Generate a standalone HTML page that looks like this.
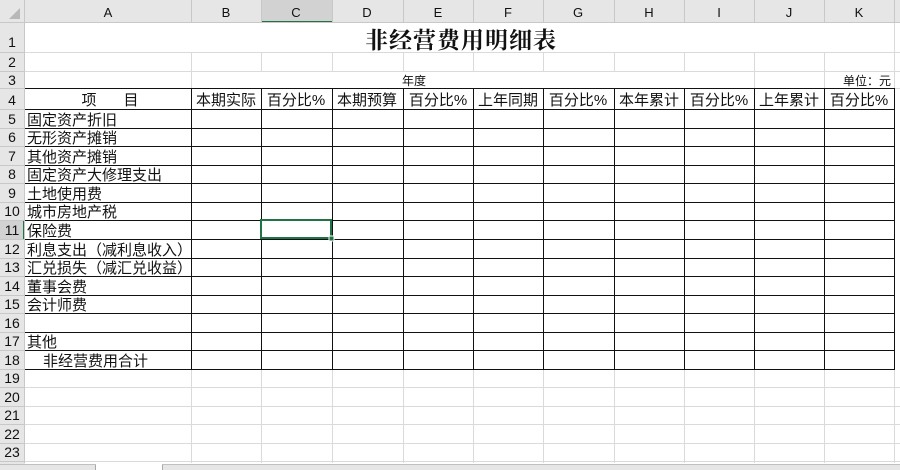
<!DOCTYPE html>
<html><head><meta charset="utf-8"><style>
html,body{margin:0;padding:0;background:#fff;width:900px;height:470px;overflow:hidden}
svg{display:block}
text{font-family:"Liberation Sans","Noto Sans CJK SC",sans-serif;fill:#111}
.h{font-family:"Liberation Serif","Noto Serif CJK SC",serif;font-size:13px;fill:#444}
.c{font-size:15px}
</style></head><body>
<svg width="900" height="470" viewBox="0 0 900 470" xmlns="http://www.w3.org/2000/svg">
<!-- headers bg -->
<rect x="0" y="0" width="900" height="23" fill="#e6e6e6"/>
<rect x="0" y="0" width="25" height="470" fill="#e6e6e6"/>
<rect x="261" y="0" width="71" height="22" fill="#d2d2d2"/>
<rect x="261" y="21" width="71" height="2" fill="#217346"/>
<rect x="0" y="220" width="24" height="19" fill="#d2d2d2"/>
<rect x="23" y="220" width="2" height="19" fill="#217346"/>
<polygon points="20,8 20,19 9,19" fill="#b8b8b8"/>
<!-- header separators -->
<g stroke="#c8c8c8" stroke-width="1">
<line x1="0" y1="22.5" x2="900" y2="22.5"/>
<line x1="24.5" y1="0" x2="24.5" y2="463"/>
<line x1="191.5" y1="0" x2="191.5" y2="22"/><line x1="261.5" y1="0" x2="261.5" y2="22"/><line x1="332.5" y1="0" x2="332.5" y2="22"/><line x1="403.5" y1="0" x2="403.5" y2="22"/><line x1="473.5" y1="0" x2="473.5" y2="22"/><line x1="543.5" y1="0" x2="543.5" y2="22"/><line x1="614.5" y1="0" x2="614.5" y2="22"/><line x1="684.5" y1="0" x2="684.5" y2="22"/><line x1="754.5" y1="0" x2="754.5" y2="22"/><line x1="824.5" y1="0" x2="824.5" y2="22"/><line x1="894.5" y1="0" x2="894.5" y2="22"/>
<line x1="0" y1="52.5" x2="24" y2="52.5"/><line x1="0" y1="71.5" x2="24" y2="71.5"/><line x1="0" y1="88.5" x2="24" y2="88.5"/><line x1="0" y1="109.5" x2="24" y2="109.5"/><line x1="0" y1="128.5" x2="24" y2="128.5"/><line x1="0" y1="146.5" x2="24" y2="146.5"/><line x1="0" y1="165.5" x2="24" y2="165.5"/><line x1="0" y1="183.5" x2="24" y2="183.5"/><line x1="0" y1="202.5" x2="24" y2="202.5"/><line x1="0" y1="220.5" x2="24" y2="220.5"/><line x1="0" y1="239.5" x2="24" y2="239.5"/><line x1="0" y1="258.5" x2="24" y2="258.5"/><line x1="0" y1="276.5" x2="24" y2="276.5"/><line x1="0" y1="295.5" x2="24" y2="295.5"/><line x1="0" y1="313.5" x2="24" y2="313.5"/><line x1="0" y1="332.5" x2="24" y2="332.5"/><line x1="0" y1="350.5" x2="24" y2="350.5"/><line x1="0" y1="369.5" x2="24" y2="369.5"/><line x1="0" y1="387.5" x2="24" y2="387.5"/><line x1="0" y1="406.5" x2="24" y2="406.5"/><line x1="0" y1="424.5" x2="24" y2="424.5"/><line x1="0" y1="443.5" x2="24" y2="443.5"/><line x1="0" y1="461.5" x2="24" y2="461.5"/>
</g>
<!-- light gridlines -->
<g stroke="#dadada" stroke-width="1">
<line x1="191.5" y1="23" x2="191.5" y2="463"/><line x1="261.5" y1="23" x2="261.5" y2="463"/><line x1="332.5" y1="23" x2="332.5" y2="463"/><line x1="403.5" y1="23" x2="403.5" y2="463"/><line x1="473.5" y1="23" x2="473.5" y2="463"/><line x1="543.5" y1="23" x2="543.5" y2="463"/><line x1="614.5" y1="23" x2="614.5" y2="463"/><line x1="684.5" y1="23" x2="684.5" y2="463"/><line x1="754.5" y1="23" x2="754.5" y2="463"/><line x1="824.5" y1="23" x2="824.5" y2="463"/><line x1="894.5" y1="23" x2="894.5" y2="463"/>
<line x1="25" y1="52.5" x2="900" y2="52.5"/><line x1="25" y1="71.5" x2="900" y2="71.5"/><line x1="25" y1="88.5" x2="900" y2="88.5"/>
<line x1="25" y1="387.5" x2="900" y2="387.5"/><line x1="25" y1="406.5" x2="900" y2="406.5"/><line x1="25" y1="424.5" x2="900" y2="424.5"/><line x1="25" y1="443.5" x2="900" y2="443.5"/><line x1="25" y1="461.5" x2="900" y2="461.5"/>
</g>
<!-- merged covers -->
<rect x="25" y="23" width="869" height="29" fill="#fff"/>
<rect x="192" y="72" width="562" height="16" fill="#fff"/>
<!-- black table lines -->
<g stroke="#111" stroke-width="1">
<line x1="25" y1="88.5" x2="895" y2="88.5"/><line x1="25" y1="109.5" x2="895" y2="109.5"/><line x1="25" y1="128.5" x2="895" y2="128.5"/><line x1="25" y1="146.5" x2="895" y2="146.5"/><line x1="25" y1="165.5" x2="895" y2="165.5"/><line x1="25" y1="183.5" x2="895" y2="183.5"/><line x1="25" y1="202.5" x2="895" y2="202.5"/><line x1="25" y1="220.5" x2="895" y2="220.5"/><line x1="25" y1="239.5" x2="895" y2="239.5"/><line x1="25" y1="258.5" x2="895" y2="258.5"/><line x1="25" y1="276.5" x2="895" y2="276.5"/><line x1="25" y1="295.5" x2="895" y2="295.5"/><line x1="25" y1="313.5" x2="895" y2="313.5"/><line x1="25" y1="332.5" x2="895" y2="332.5"/><line x1="25" y1="350.5" x2="895" y2="350.5"/><line x1="25" y1="369.5" x2="895" y2="369.5"/>
<line x1="191.5" y1="88" x2="191.5" y2="370"/><line x1="261.5" y1="88" x2="261.5" y2="370"/><line x1="332.5" y1="88" x2="332.5" y2="370"/><line x1="403.5" y1="88" x2="403.5" y2="370"/><line x1="473.5" y1="88" x2="473.5" y2="370"/><line x1="543.5" y1="88" x2="543.5" y2="370"/><line x1="614.5" y1="88" x2="614.5" y2="370"/><line x1="684.5" y1="88" x2="684.5" y2="370"/><line x1="754.5" y1="88" x2="754.5" y2="370"/><line x1="824.5" y1="88" x2="824.5" y2="370"/><line x1="894.5" y1="88" x2="894.5" y2="370"/>
</g>
<!-- selection -->
<rect x="261" y="220" width="70" height="18" fill="none" stroke="#217346" stroke-width="2"/>
<rect x="329" y="236" width="5" height="5" fill="#217346" stroke="#fff" stroke-width="1"/>
<!-- column letters -->
<g class="h" text-anchor="middle">
<text x="108" y="17">A</text><text x="226" y="17">B</text><text x="296" y="17">C</text><text x="367" y="17">D</text><text x="438" y="17">E</text><text x="508" y="17">F</text><text x="578" y="17">G</text><text x="649" y="17">H</text><text x="719" y="17">I</text><text x="789" y="17">J</text><text x="859" y="17">K</text>
</g>
<!-- row numbers -->
<g class="h" text-anchor="middle" style="font-size:14px">
<text x="12" y="47">1</text><text x="12" y="67">2</text><text x="12" y="85">3</text><text x="12" y="105">4</text><text x="12" y="124">5</text><text x="12" y="142">6</text><text x="12" y="161">7</text><text x="12" y="179">8</text><text x="12" y="198">9</text><text x="12" y="216">10</text><text x="12" y="235">11</text><text x="12" y="254">12</text><text x="12" y="272">13</text><text x="12" y="291">14</text><text x="12" y="309">15</text><text x="12" y="328">16</text><text x="12" y="346">17</text><text x="12" y="365">18</text><text x="12" y="383">19</text><text x="12" y="402">20</text><text x="12" y="420">21</text><text x="12" y="439">22</text><text x="12" y="457">23</text>
</g>
<!-- title -->
<text x="461" y="48" text-anchor="middle" style="font-family:'Liberation Serif','Noto Serif CJK SC',serif;font-size:23px;font-weight:bold;letter-spacing:1px">非经营费用明细表</text>
<text x="414" y="85" text-anchor="middle" style="font-size:12px">年度</text>
<text x="891" y="85" text-anchor="end" style="font-size:12px">单位：元</text>
<!-- header row -->
<g class="c" text-anchor="middle">
<text x="89" y="105">项</text><text x="131" y="105">目</text>
<text x="226" y="105">本期实际</text><text x="296" y="105">百分比%</text><text x="367" y="105">本期预算</text><text x="438" y="105">百分比%</text><text x="508" y="105">上年同期</text><text x="578" y="105">百分比%</text><text x="649" y="105">本年累计</text><text x="719" y="105">百分比%</text><text x="789" y="105">上年累计</text><text x="859" y="105">百分比%</text>
</g>
<g class="c">
<text x="27" y="125">固定资产折旧</text>
<text x="27" y="143">无形资产摊销</text>
<text x="27" y="162">其他资产摊销</text>
<text x="27" y="180">固定资产大修理支出</text>
<text x="27" y="199">土地使用费</text>
<text x="27" y="217">城市房地产税</text>
<text x="27" y="236">保险费</text>
<text x="27" y="255">利息支出（减利息收入）</text>
<text x="27" y="273">汇兑损失（减汇兑收益）</text>
<text x="27" y="292">董事会费</text>
<text x="27" y="310">会计师费</text>
<text x="27" y="347">其他</text>
<text x="43" y="366">非经营费用合计</text>
</g>
<!-- tab bar -->
<rect x="0" y="464" width="900" height="6" fill="#e6e6e6"/>
<line x1="0" y1="464.5" x2="900" y2="464.5" stroke="#c0c0c0"/>
<rect x="96" y="464" width="66" height="6" fill="#fff"/>
<line x1="95.5" y1="465" x2="95.5" y2="470" stroke="#aaa"/>
<line x1="162.5" y1="465" x2="162.5" y2="470" stroke="#aaa"/>
</svg>
</body></html>
